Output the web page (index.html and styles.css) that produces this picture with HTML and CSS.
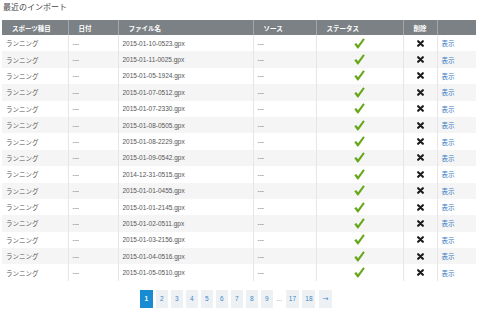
FILE: index.html
```html
<!DOCTYPE html>
<html lang="ja">
<head>
<meta charset="utf-8">
<link rel="stylesheet" href="styles.css">
</head>
<body>
<div class="page">
  <h4 class="title">最近のインポート</h4>
  <table class="imports">
    <colgroup>
      <col class="c-sport"><col class="c-date"><col class="c-file"><col class="c-src"><col class="c-status"><col class="c-del"><col class="c-view">
    </colgroup>
    <thead>
      <tr><th>スポーツ種目</th><th>日付</th><th>ファイル名</th><th>ソース</th><th>ステータス</th><th>削除</th><th></th></tr>
    </thead>
    <tbody id="rows"></tbody>
  </table>
  <nav class="pager">
    <a class="pg active">1</a><a class="pg">2</a><a class="pg">3</a><a class="pg">4</a><a class="pg">5</a><a class="pg">6</a><a class="pg">7</a><a class="pg">8</a><a class="pg">9</a><span class="dots">...</span><a class="pg wide">17</a><a class="pg wide">18</a><a class="pg wide arrow">→</a>
  </nav>
</div>
<script src="app.js"></script>
</body>
</html>
```
FILE: app.js
```js
var files = ["2015-01-10-0523.gpx","2015-01-11-0025.gpx","2015-01-05-1924.gpx","2015-01-07-0512.gpx","2015-01-07-2330.gpx","2015-01-08-0505.gpx","2015-01-08-2229.gpx","2015-01-09-0542.gpx","2014-12-31-0515.gpx","2015-01-01-0455.gpx","2015-01-01-2145.gpx","2015-01-02-0511.gpx","2015-01-03-2156.gpx","2015-01-04-0516.gpx","2015-01-05-0510.gpx"];
var check = '<svg class="ok" width="11" height="11" viewBox="0 0 11 11"><path d="M0.3 6.2 L2.2 4.9 L4 7.2 L9.2 0.2 L10.8 1.4 L4.3 10.6 L3.4 10.6 Z" fill="#66a81a"/></svg>';
var cross = '<svg class="x" width="7" height="7" viewBox="0 0 8 8"><path d="M1.3 1.3 L6.7 6.7 M6.7 1.3 L1.3 6.7" stroke="#1c1c1c" stroke-width="2.4" stroke-linecap="round"/></svg>';
var html = "";
files.forEach(function (f) {
  html += '<tr><td>ランニング</td><td class="muted">---</td><td>' + f + '</td><td class="muted">---</td><td class="center">' + check + '</td><td class="center">' + cross + '</td><td><a class="link">表示</a></td></tr>';
});
document.getElementById("rows").innerHTML = html;
```
FILE: styles.css
```css
html, body {
  margin: 0;
  padding: 0;
  background: #fff;
}
body {
  font-family: "Liberation Sans", "Noto Sans CJK JP", sans-serif;
  color: #555;
}
.page {
  padding: 0 4px 0 2px;
}
.title {
  margin: 2px 0 6px 1px;
  font-size: 8px;
  line-height: 12px;
  font-weight: normal;
  color: #444;
}
.imports {
  width: 474px;
  table-layout: fixed;
  border-collapse: collapse;
  font-size: 6.5px;
}
.c-sport { width: 66px; }
.c-date { width: 50px; }
.c-file { width: 135px; }
.c-src { width: 63px; }
.c-status { width: 87px; }
.c-del { width: 34px; }
.c-view { width: 39px; }
.imports th {
  background: #7c8186;
  color: #fff;
  font-weight: bold;
  text-align: left;
  height: 15px;
  padding: 0 0 0 10px;
  border-left: 1px solid #a3a7ab;
  white-space: nowrap;
}
.imports th:first-child { border-left: none; }
.imports td {
  height: 16.4px;
  padding: 0 4px;
  border-left: 1px solid #e6e6e6;
  color: #555;
  white-space: nowrap;
  vertical-align: middle;
}
.imports td:first-child { border-left: none; }
.imports tbody tr:nth-child(even) td { background: #f5f5f5; }
.imports td.muted { color: #777; }
.imports td.center { text-align: center; padding: 0; }
.ok, .x { display: block; margin: 0 auto; }
.link { color: #3a7bc0; }
.pager {
  display: flex;
  justify-content: center;
  align-items: center;
  gap: 3.5px;
  margin-top: 9px;
  padding-right: 6px;
}
.pg {
  display: flex;
  align-items: center;
  justify-content: center;
  width: 11.5px;
  height: 18px;
  background: #eef1f4;
  color: #3a86c8;
  font-size: 6.5px;
}
.pg.wide { width: 13px; }
.pg.arrow {
  font-family: "DejaVu Sans", sans-serif;
  font-size: 7px;
}
.pg.active {
  background: #178cd3;
  color: #fff;
  font-weight: bold;
  width: 12.5px;
}
.dots {
  font-size: 6.5px;
  color: #888;
  padding: 0 0.5px;
}
```
